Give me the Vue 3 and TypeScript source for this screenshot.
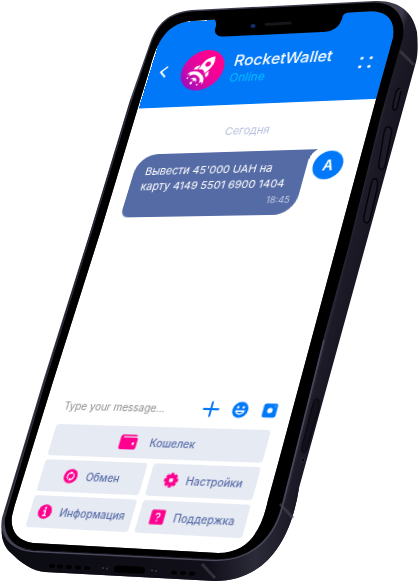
<script setup lang="ts">
import { computed, onBeforeUnmount, onMounted, ref } from 'vue'

interface Message {
  id: number
  lines: string[]
  time: string
  author: string
}

interface Key {
  label: string
  icon: 'wallet' | 'swap' | 'gear' | 'info' | 'help'
  wide?: boolean
}

type Point = [number, number]

const messages: Message[] = [
  { id: 1, lines: ["Вывести 45'000 UAH на", 'карту 4149 5501 6900 1404'], time: '18:45', author: 'A' },
]

const keys: Key[] = [
  { label: 'Кошелек', icon: 'wallet', wide: true },
  { label: 'Обмен', icon: 'swap' },
  { label: 'Настройки', icon: 'gear' },
  { label: 'Информация', icon: 'info' },
  { label: 'Поддержка', icon: 'help' },
]

const draft = ref('')

// Corners of the display, in the units of the phone drawing.
const view = { width: 418, height: 581 }
const corners: Point[] = [
  [165, 23],
  [401, 9],
  [255, 555],
  [5, 541],
]

const stage = ref<HTMLElement | null>(null)
const screen = ref<HTMLElement | null>(null)
const size = ref({ stageW: 418, stageH: 581, w: 242, h: 530 })

function measure() {
  if (!stage.value || !screen.value) return
  size.value = {
    stageW: stage.value.clientWidth,
    stageH: stage.value.clientHeight,
    w: screen.value.offsetWidth,
    h: screen.value.offsetHeight,
  }
}

let observer: ResizeObserver | undefined
onMounted(() => {
  measure()
  observer = new ResizeObserver(measure)
  if (stage.value) observer.observe(stage.value)
})
onBeforeUnmount(() => observer?.disconnect())

// Perspective projection of the flat display onto the tilted phone.
const projection = computed(() => {
  const { stageW, stageH, w, h } = size.value
  const [p0, p1, p2, p3] = corners.map(
    ([x, y]): Point => [(x * stageW) / view.width, (y * stageH) / view.height],
  )
  const dx1 = p1[0] - p2[0]
  const dx2 = p3[0] - p2[0]
  const sx = p0[0] - p1[0] + p2[0] - p3[0]
  const dy1 = p1[1] - p2[1]
  const dy2 = p3[1] - p2[1]
  const sy = p0[1] - p1[1] + p2[1] - p3[1]
  const den = dx1 * dy2 - dx2 * dy1
  const g = (sx * dy2 - dx2 * sy) / den
  const k = (dx1 * sy - sx * dy1) / den
  const a = (p1[0] - p0[0] + g * p1[0]) / w
  const d = (p1[1] - p0[1] + g * p1[1]) / w
  const b = (p3[0] - p0[0] + k * p3[0]) / h
  const e = (p3[1] - p0[1] + k * p3[1]) / h
  const m = [a, d, 0, g / w, b, e, 0, k / h, 0, 0, 1, 0, p0[0], p0[1], 0, 1]
  return { transform: `matrix3d(${m.map((n) => n.toFixed(8)).join(',')})` }
})
</script>

<template>
  <main ref="stage" class="stage">
    <section ref="screen" class="screen" :style="projection">
      <header class="header">
        <button class="icon-button back" type="button" aria-label="Back">
          <svg viewBox="0 0 10 14" width="10" height="14"><path d="M7.500 1.800 2 7l5.500 5.200" fill="none" stroke="#fff" stroke-width="1.800" stroke-linecap="round" stroke-linejoin="round" /></svg>
        </button>
        <svg class="logo" viewBox="0 0 44 44" width="44" height="44" aria-hidden="true">
          <defs>
            <linearGradient id="logo-fill" x1="0.100" y1="0.950" x2="0.700" y2="0.300">
              <stop offset="0" stop-color="#8a0fc4" />
              <stop offset="0.500" stop-color="#d808a4" />
              <stop offset="1" stop-color="#ff0090" />
            </linearGradient>
          </defs>
          <circle cx="22" cy="22" r="22" fill="url(#logo-fill)" />
          <g transform="translate(22.500 21.500) rotate(32) scale(0.920)" fill="#fff">
            <path fill-rule="evenodd" d="M0-18C4.500-14.500 6.500-10 6-4.500L4.800 2.500C2-.2-2-.2-4.800 2.500L-6-4.500C-6.500-10-4.500-14.500 0-18ZM0-10.500a3 3 0 1 0 0 6 3 3 0 0 0 0-6Z" />
            <path d="M-6.800-2.500-10 1.500-10 5-6 3Z M6.800-2.500 10 1.500 10 5 6 3Z" />
            <path d="M-12 13C-10.500 1.500 10.500 1.500 12 13L9.500 11 8 13.500C6 6.500-6 6.500-8 13.500L-9.500 11Z" />
            <path d="M-4 15C-3.500 10 3.500 10 4 15L1.800 13.500 0 15.500-1.800 13.500Z" />
            <circle cx="0" cy="18" r="1.500" />
            <circle cx="-8" cy="16" r="1" />
            <circle cx="7.500" cy="16" r="1" />
          </g>
        </svg>
        <div class="who">
          <h1 class="name">RocketWallet</h1>
          <p class="status">Online</p>
        </div>
        <button class="icon-button more" type="button" aria-label="Menu">
          <svg viewBox="0 0 14 14" width="14" height="14" fill="#fff"><circle cx="2.500" cy="2.500" r="1.600" /><circle cx="11.500" cy="2.500" r="1.600" /><circle cx="2.500" cy="11.500" r="1.600" /><circle cx="11.500" cy="11.500" r="1.600" /></svg>
        </button>
      </header>

      <div class="messages">
        <p class="day">Сегодня</p>
        <article v-for="message in messages" :key="message.id" class="message">
          <div class="bubble">
            <p v-for="line in message.lines" :key="line" class="line">{{ line }}</p>
            <time class="time">{{ message.time }}</time>
          </div>
          <span class="author">{{ message.author }}</span>
        </article>
      </div>

      <form class="composer" @submit.prevent="draft = ''">
        <input v-model="draft" class="draft" type="text" aria-label="Message" placeholder="Type your message..." />
        <button class="icon-button" type="button" aria-label="Attach">
          <svg viewBox="0 0 16 16" width="16" height="16"><path d="M8 1.500v13M1 8h14" stroke="#0078f8" stroke-width="1.900" stroke-linecap="round" /></svg>
        </button>
        <button class="icon-button" type="button" aria-label="Emoji">
          <svg viewBox="0 0 16 16" width="16" height="16"><circle cx="8" cy="8" r="7.500" fill="#0078f8" /><circle cx="5.400" cy="5.600" r="1.200" fill="#fff" /><circle cx="10.600" cy="5.600" r="1.200" fill="#fff" /><path d="M3.300 8.600h9.400c-.8 5.400-8.600 5.400-9.400 0Z" fill="#fff" /><path d="M5.200 10h5.600c-1.200 1.900-4.400 1.900-5.600 0Z" fill="#0078f8" /></svg>
        </button>
        <button class="icon-button" type="button" aria-label="Camera">
          <svg viewBox="0 0 16 16" width="16" height="16"><rect x="1.500" y="1.500" width="13" height="13" rx="2" fill="#0078f8" /><circle cx="8" cy="8" r="2.500" fill="#fff" /><circle cx="12.200" cy="4" r="0.500" fill="#fff" /></svg>
        </button>
      </form>

      <nav class="keys">
        <button v-for="key in keys" :key="key.label" type="button" class="key" :class="{ wide: key.wide }">
          <svg v-if="key.icon === 'wallet'" viewBox="0 0 18 16" width="18" height="16">
            <path d="M3 1h12a2 2 0 0 1 1.800 1.500H3.200V3.800H16a1.500 1.500 0 0 1 1.500 1.500v7.700A2 2 0 0 1 15.500 15H2.500A2 2 0 0 1 .5 13V3.500A2.500 2.500 0 0 1 3 1Z" fill="#ff008f" />
            <circle cx="13.800" cy="9.500" r="1.200" fill="#fff" />
          </svg>
          <svg v-else-if="key.icon === 'swap'" viewBox="0 0 14 14" width="14" height="14">
            <circle cx="7" cy="7" r="6.800" fill="#ff008f" />
            <path d="M5 9.600A3.300 3.300 0 0 1 7 3.700M9 4.400A3.300 3.300 0 0 1 7 10.300" fill="none" stroke="#fff" stroke-width="1.200" />
            <path d="M6.600 2.200 8.900 3.900 6.600 5.600ZM7.400 8.400 5.100 10.100 7.400 11.800Z" fill="#fff" />
          </svg>
          <svg v-else-if="key.icon === 'gear'" viewBox="0 0 14 14" width="14" height="14">
            <g fill="#ff008f">
              <rect v-for="n in 4" :key="n" x="5.300" y="0.300" width="3.400" height="13.400" rx="0.800" :transform="`rotate(${n * 45} 7 7)`" />
              <circle cx="7" cy="7" r="5" />
            </g>
            <circle cx="7" cy="7" r="2.100" fill="#e6eaf3" />
          </svg>
          <svg v-else-if="key.icon === 'info'" viewBox="0 0 14 14" width="14" height="14">
            <circle cx="7" cy="7" r="6.800" fill="#ff008f" />
            <circle cx="7" cy="3.600" r="1.100" fill="#fff" />
            <path d="M5.300 6.200h2v4.400M5.200 10.600h3.800" fill="none" stroke="#fff" stroke-width="1.400" />
          </svg>
          <svg v-else viewBox="0 0 14 14" width="14" height="14">
            <rect x="0.300" y="0.300" width="13.400" height="13.400" rx="1.500" fill="#ff008f" />
            <path d="M5.200 5.300c0-2.400 3.700-2.300 3.700 0C8.900 6.700 7 6.700 7 8.300" fill="none" stroke="#fff" stroke-width="1.200" />
            <circle cx="7" cy="10.300" r="0.800" fill="#fff" />
          </svg>
          <span>{{ key.label }}</span>
        </button>
      </nav>
    </section>

    <svg class="phone" viewBox="0 0 418 581" aria-hidden="true">
      <defs>
        <linearGradient id="side" gradientUnits="userSpaceOnUse" x1="330" y1="300" x2="358" y2="307">
          <stop offset="0" stop-color="#3c3b4c" />
          <stop offset="0.250" stop-color="#1c1b27" />
          <stop offset="1" stop-color="#14131e" />
        </linearGradient>
        <linearGradient id="chin" gradientUnits="userSpaceOnUse" x1="0" y1="0" x2="300" y2="0">
          <stop offset="0" stop-color="#0b0b12" />
          <stop offset="0.700" stop-color="#11101a" />
          <stop offset="0.850" stop-color="#2b2a38" />
          <stop offset="1" stop-color="#171621" />
        </linearGradient>
      </defs>
      <!-- metal side -->
      <path
        fill="url(#side)" fill-rule="evenodd"
        d="M150 43C157 24 168 12 192 10L375 1C399 0 413 12 417 32C418 44 418 54 416 62L299 488C291 540 266 581 215 581L45 572C32 571 20 562 11 553C2 545 0 530 2 518L43.500 380L90.700 230L130 100ZM137.700 108.500L101 230L53.500 380L14.500 506L12 516C10 530 17 541 33 543L218 553C250 553 262 528 268 500L279 460L375.700 100.400L393 38C396 19 386 11 370 11.300L190 21C166 24 157 42 150 68Z"
      />
      <path fill="url(#chin)" d="M2 530C6 545 17 549 33 550L215 559C248 560 272 540 281 506L299 488C291 540 266 581 215 581L45 572C32 571 20 562 11 553C4 547 1 538 2 530Z" />
      <!-- glass face -->
      <path
        fill="#000" fill-rule="evenodd"
        d="M151 44C158 25 168 14 192 11.500L373 2.500C394 2 406 16 403 37L381 115L349 245L323 340L293 460L281 507C272 541 248 560 215 559L33 550C14 549 3 536 5 518L46 380L92.500 230L132 100ZM137.700 108.500L101 230L53.500 380L14.500 506L12 516C10 530 17 541 33 543L218 553C250 553 262 528 268 500L279 460L375.700 100.400L393 38C396 19 386 11 370 11.300L349 12.600C345 13 343 14 342 19C339 27 334 31.500 322 32L225 36.500C218 37 214 34 215 29C217 24 216 21 214.500 19.500L190 21C166 24 157 42 150 68Z"
      />
      <!-- edge highlights -->
      <path d="M324 340 294 460 282 508C273 541 249 561 215 560.500L33 551.500C14 550 4 540 4 526" fill="none" stroke="#4a495b" stroke-width="1.400" />
      <path d="M5 512 45 380 91.500 230 131 100" fill="none" stroke="#24232f" stroke-width="1" />
      <!-- antenna bands -->
      <path d="M400 51 414 65M280 504 293 518M202 564 215 578" stroke="#4a4450" stroke-width="3" opacity="0.600" fill="none" />
      <!-- side buttons -->
      <g fill="#1d1c28" stroke="#050509" stroke-width="1.400">
        <path d="M400 88.500C397 88 396 91 395 96L393 105C392 110 395 112 397 108L401 91" />
        <path d="M389 127C386 126 385 129 384 133L379 163C378 170 383 172 385 166L391 135C392 130 392 128 389 127Z" />
        <path d="M376 179C373 178 372 181 371 185L364 216C363 224 368 225 370 219L377 189C378 183 378 180 376 179Z" />
      </g>
      <path d="M319 400C316 397 314 400 313 404L302 446C300 454 305 455 307 449L319 408Z" fill="#12111b" stroke="#08080e" stroke-width="1" />
      <circle cx="303" cy="460" r="2" fill="#050509" stroke="#34323f" stroke-width="0.800" />
      <!-- speaker, port and camera -->
      <g fill="#000">
        <ellipse cx="52" cy="566" rx="3" ry="2" /><ellipse cx="60" cy="566.500" rx="3" ry="2" /><ellipse cx="69" cy="567" rx="3" ry="2" /><ellipse cx="78" cy="567.500" rx="3" ry="2" /><ellipse cx="87" cy="568" rx="3" ry="2" />
        <rect x="114" y="566" width="31" height="7" rx="3.500" transform="rotate(3 129 569)" />
        <ellipse cx="174" cy="572.500" rx="3" ry="2" /><ellipse cx="183" cy="573" rx="3" ry="2" /><ellipse cx="192" cy="573.500" rx="3" ry="2" />
      </g>
      <g fill="#3b3a45"><circle cx="103" cy="568" r="1" /><circle cx="107" cy="568.500" r="1" /><circle cx="152" cy="570.500" r="1" /><circle cx="156" cy="571" r="1" /></g>
      <path d="M266 24.500 290 23" stroke="#15151a" stroke-width="3" stroke-linecap="round" />
      <ellipse cx="253" cy="26" rx="2.500" ry="2" fill="#12306e" />
    </svg>
  </main>
</template>

<style>
body {
  background: #fff;
}
</style>

<style scoped>
.stage {
  display: grid;
  width: 100%;
  max-width: 480px;
  aspect-ratio: 418 / 581;
  overflow: hidden;
  font-family: Inter, "Noto Sans", sans-serif;
}

.screen,
.phone {
  grid-area: 1 / 1;
}

.screen {
  display: flex;
  flex-direction: column;
  box-sizing: border-box;
  width: 58%;
  height: 91%;
  overflow: hidden;
  border-radius: 16px;
  background: #fff;
  transform-origin: 0 0;
}

.phone {
  z-index: 1;
  width: 100%;
  height: 100%;
  pointer-events: none;
}

p,
h1 {
  margin: 0;
}

button {
  padding: 0;
  border: 0;
  background: none;
  font: inherit;
  cursor: pointer;
}

svg {
  display: block;
  flex: none;
}

.icon-button {
  display: grid;
  place-items: center;
}

.header {
  display: flex;
  align-items: center;
  padding: 33px 14px 17px 10px;
  background: #0078f8;
  color: #fff;
}

.logo {
  margin: 0 9px 0 14px;
}

.who {
  flex: 1;
}

.name {
  font-size: 16px;
  font-weight: 500;
  line-height: 20px;
}

.status {
  color: #00c3ff;
  font-size: 12px;
  line-height: 18px;
}

.messages {
  flex: 1;
  padding: 20px 16px 0;
}

.day {
  margin-bottom: 14px;
  color: #b4bedb;
  font-size: 11px;
  line-height: 16px;
  text-align: center;
}

.message {
  display: flex;
  align-items: flex-start;
  gap: 6px;
}

.bubble {
  position: relative;
  flex: 1;
  box-sizing: border-box;
  padding: 10px 8px 6px 12px;
  border-radius: 20px 0 20px 8px;
  background: #556ba6;
  color: #fff;
  white-space: nowrap;
}

.bubble::after {
  position: absolute;
  top: 0;
  left: 100%;
  width: 8px;
  height: 14px;
  background: radial-gradient(ellipse 8px 14px at 100% 100%, transparent 98%, #556ba6 100%);
  content: "";
}

.line {
  font-size: 11px;
  line-height: 16px;
}

.time {
  display: block;
  color: #c3cbe2;
  font-size: 9px;
  line-height: 18px;
  text-align: right;
}

.author {
  display: grid;
  place-items: center;
  width: 29px;
  height: 29px;
  margin-top: 2px;
  border-radius: 50%;
  background: #0078f8;
  color: #fff;
  font-size: 14px;
  font-weight: 600;
}

.composer {
  display: flex;
  align-items: center;
  gap: 12px;
  padding: 0 14px 10px 18px;
}

.draft {
  flex: 1;
  min-width: 0;
  padding: 0;
  border: 0;
  outline: 0;
  background: none;
  color: #555;
  font: inherit;
  font-size: 10px;
  line-height: 16px;
}

.draft::placeholder {
  color: #8c8c8c;
  opacity: 1;
}

.keys {
  display: grid;
  grid-template-columns: 1fr 1fr;
  gap: 4px 6px;
  padding: 0 16px 14px;
}

.key {
  display: flex;
  align-items: center;
  justify-content: center;
  gap: 8px;
  height: 30px;
  border-radius: 3px;
  background: #e6eaf3;
  color: #5a6ea8;
  font-size: 10px;
  font-weight: 500;
  white-space: nowrap;
}

.wide {
  grid-column: 1 / -1;
  gap: 12px;
}
</style>
